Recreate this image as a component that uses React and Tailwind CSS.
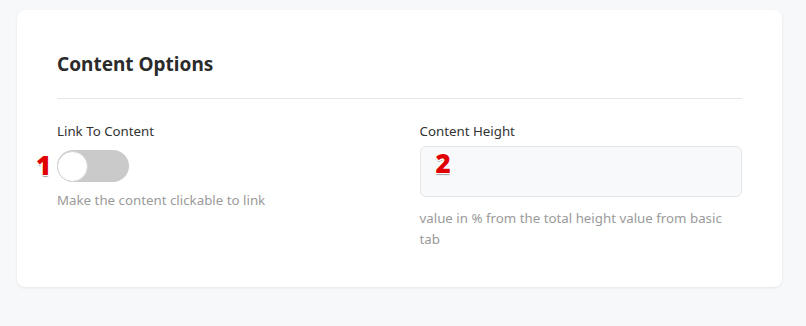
import { useState } from "react";

function Marker({ n, className }) {
  return (
    <span
      className={
        "absolute text-[26px] leading-none font-black text-[#e00000] " + className
      }
      style={{
        textShadow:
          "1px 0 0 #fff, -1px 0 0 #fff, 0 1px 0 #fff, 0 -1px 0 #fff, 1px 1px 0 #fff, -1px -1px 0 #fff, 1px -1px 0 #fff, -1px 1px 0 #fff, 0 2px 1px rgba(0,0,0,0.35)",
      }}
    >
      {n}
    </span>
  );
}

export default function App() {
  const [linked, setLinked] = useState(false);

  return (
    <div className="min-h-[326px] bg-[#f7f8fa] pt-[10px] pl-[17px] pr-[24px] pb-[39px] font-['Noto_Sans',sans-serif]">
      <div className="bg-white rounded-lg shadow-[0_1px_3px_rgba(0,0,0,0.08)] px-10 pt-[40px] pb-[37px]">
        <h2 className="text-[19px] leading-[28px] font-bold text-[#2b2b2b]">
          Content Options
        </h2>
        <div className="border-t border-[#e4e6ea] mt-[20px] mb-[22px]" />

        <div className="grid grid-cols-2 gap-10">
          <div>
            <label className="block text-[13.3px] leading-[20px] text-[#333]">
              Link To Content
            </label>
            <div className="relative mt-[9px]">
              <Marker n="1" className="left-[-21px] top-[2px]" />
              <button
                type="button"
                onClick={() => setLinked(!linked)}
                className={
                  "relative flex items-center w-[72px] h-[32px] rounded-full " +
                  (linked ? "bg-[#3b82f6]" : "bg-[#cacaca]")
                }
              >
                <span
                  className={
                    "w-[31px] h-[31px] rounded-full bg-white border border-[#d4d4d4] " +
                    (linked ? "ml-[41px]" : "ml-0")
                  }
                />
              </button>
            </div>
            <p className="mt-[8px] text-[13.3px] leading-[20px] text-[#9a9a9a]">
              Make the content clickable to link
            </p>
          </div>

          <div>
            <label className="block text-[13.3px] leading-[20px] text-[#333]">
              Content Height
            </label>
            <div className="relative mt-[5px]">
              <Marker n="2" className="left-[16px] top-[4px]" />
              <input
                type="text"
                className="w-full h-[51px] rounded-md bg-[#f8f9fa] border border-[#e3e5e8] px-4 text-[13px] outline-none"
              />
            </div>
            <p className="mt-[11px] text-[13.3px] leading-[21px] text-[#9a9a9a]">
              value in % from the total height value from basic tab
            </p>
          </div>
        </div>
      </div>
    </div>
  );
}
